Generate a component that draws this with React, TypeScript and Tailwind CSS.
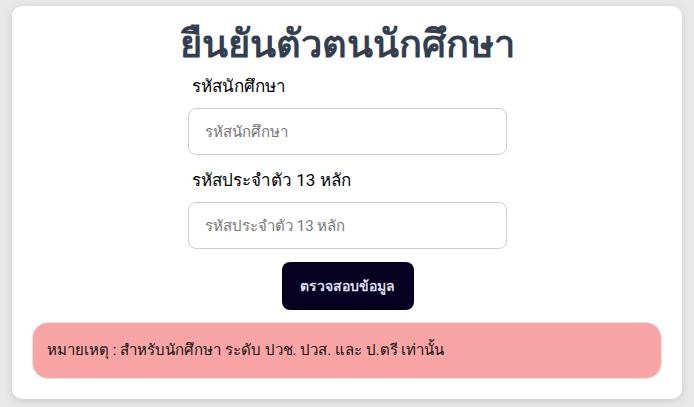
export default function App() {
  return (
    <div
      className="min-h-[407px] bg-[#e8e8e8] px-3 pt-[6px] pb-2"
      style={{ fontFamily: 'Roboto, "Noto Sans", "DejaVu Sans", sans-serif' }}>
      <div className="rounded-[10px] bg-white px-5 pt-3 pb-5 shadow-[0_2px_8px_rgba(0,0,0,0.12)]">
        <h1 className="text-center text-[38px] font-bold leading-[52px] text-[#333f50]">
          ยืนยันตัวตนนักศึกษา
        </h1>

        <div className="mx-auto mt-1 flex w-[320px] flex-col pl-px">
          <label className="px-1 text-[17px] leading-6 text-black">รหัสนักศึกษา</label>
          <input
            type="text"
            placeholder="รหัสนักศึกษา"
            className="mt-[10px] h-[47px] rounded-lg border border-[#cfcfcf] px-4 text-[15px] text-black placeholder:text-[#777]"
          />

          <label className="mt-[13px] px-1 text-[17px] leading-6 text-black">
            รหัสประจำตัว 13 หลัก
          </label>
          <input
            type="text"
            placeholder="รหัสประจำตัว 13 หลัก"
            className="mt-[10px] h-[47px] rounded-lg border border-[#cfcfcf] px-4 text-[15px] text-black placeholder:text-[#777]"
          />

          <button
            type="button"
            className="mx-auto mt-[13px] h-[48px] w-[132px] rounded-lg bg-[#050020] text-[14px] font-bold text-[#dcdcea]">
            ตรวจสอบข้อมูล
          </button>
        </div>

        <div className="mt-3 flex h-[57px] items-center rounded-2xl border border-[#e2e2e2] bg-[#f9a5a5] px-[14px] text-[15px] text-[#111]">
          หมายเหตุ : สำหรับนักศึกษา ระดับ ปวช. ปวส. และ ป.ตรี เท่านั้น
        </div>
      </div>
    </div>
  );
}
